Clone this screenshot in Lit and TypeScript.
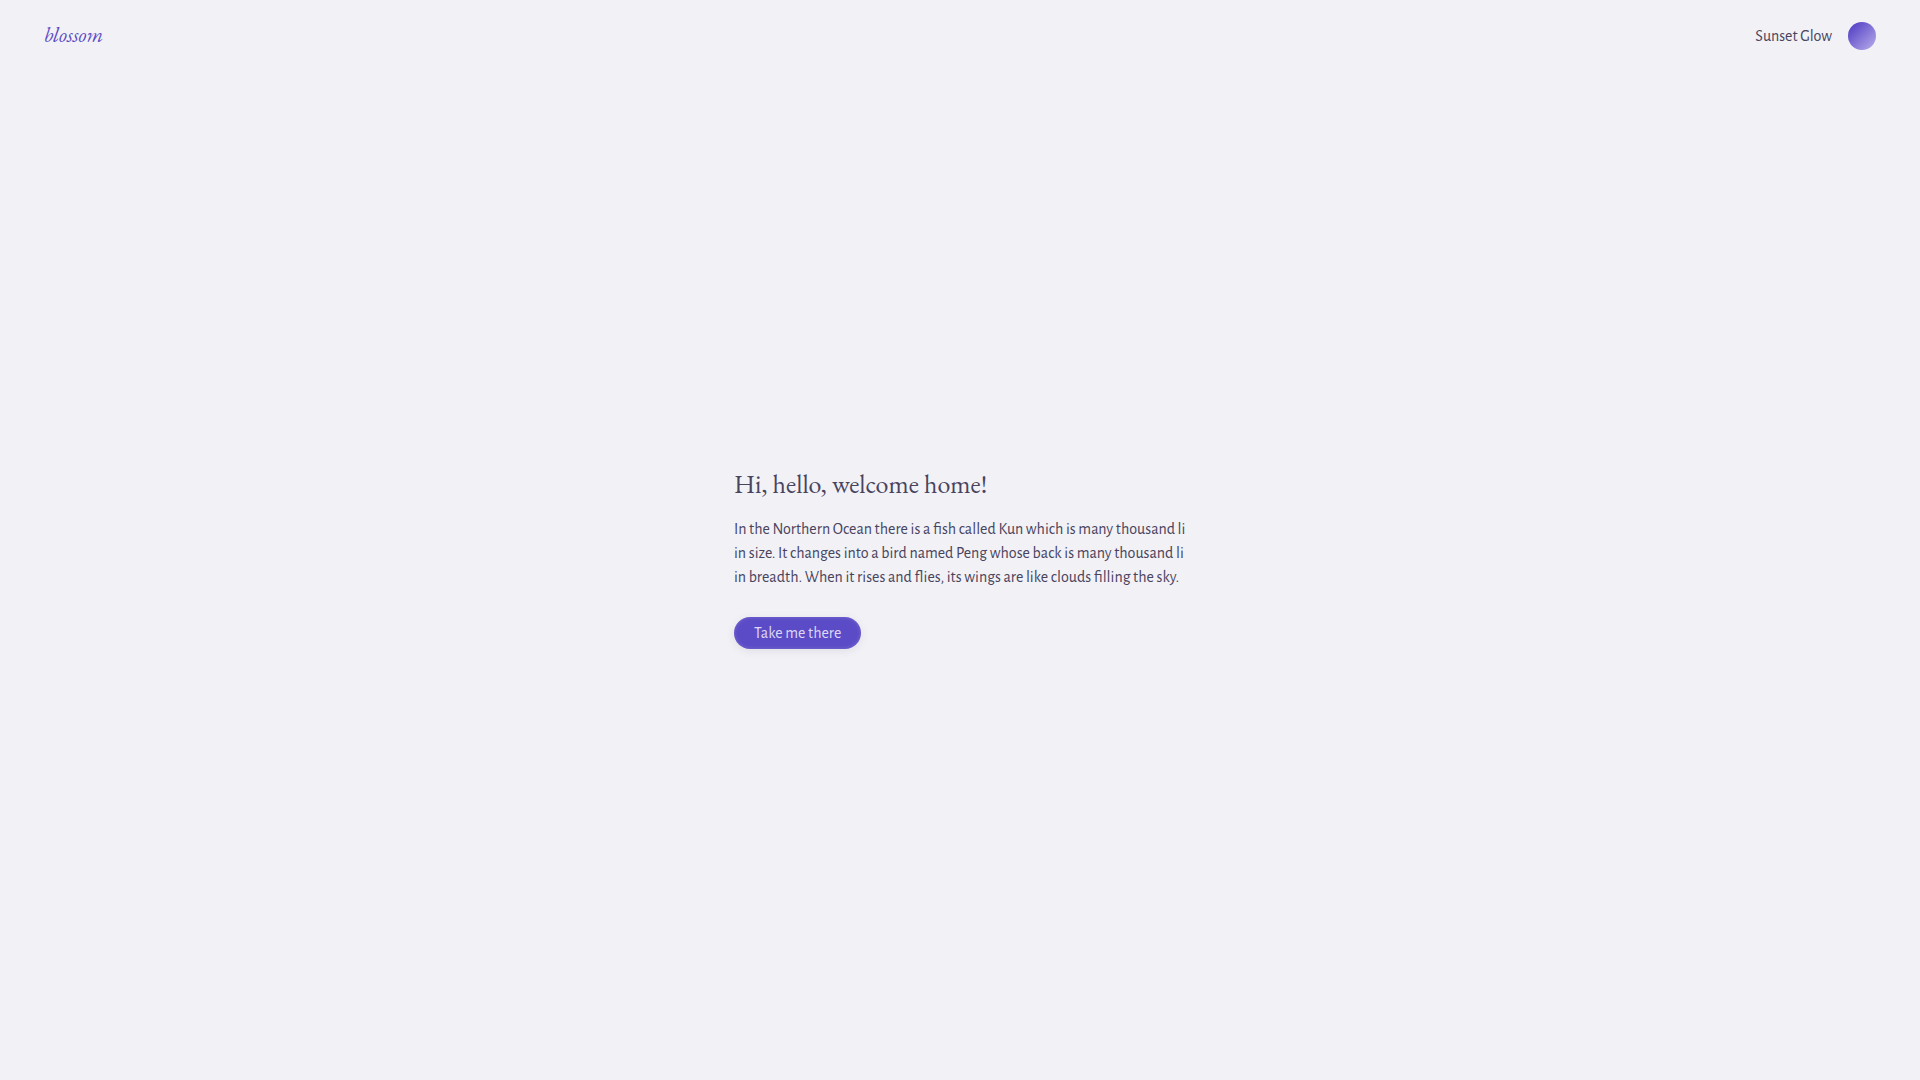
import { LitElement, html, css } from "lit";
import { customElement, property } from "lit/decorators.js";

@customElement("app-root")
export class AppRoot extends LitElement {
  @property() userName = "Sunset Glow";

  static styles = css`
    :host {
      display: flex;
      flex-direction: column;
      min-height: 100vh;
      box-sizing: border-box;
      background: #f2f1f6;
      color: #48445e;
      font-family: "Alegreya Sans", Lato, "Liberation Sans", sans-serif;
      font-size: 16px;
      line-height: 24px;
    }
    .bar {
      display: flex;
      align-items: center;
      justify-content: space-between;
      padding: 22px 44px;
    }
    .brand {
      padding-bottom: 2px;
      color: #5b4bc4;
      font-family: "EB Garamond", "Liberation Serif", serif;
      font-size: 21px;
      font-style: italic;
      text-decoration: none;
    }
    .account {
      display: flex;
      align-items: center;
      gap: 16px;
    }
    .avatar {
      width: 28px;
      height: 28px;
      border-radius: 50%;
      background: linear-gradient(135deg, #5a48c8 15%, #b9aeea 100%);
    }
    .main {
      flex: 1;
      display: flex;
      flex-direction: column;
      align-items: center;
      justify-content: center;
      padding: 0 24px 36px;
    }
    .welcome {
      width: 100%;
      max-width: 452px;
    }
    .title {
      margin: 0 0 16px;
      font-family: "EB Garamond", "Liberation Serif", serif;
      font-size: 26px;
      font-weight: 400;
      line-height: 34px;
    }
    .text {
      margin: 0 0 28px;
    }
    .action {
      display: block;
      height: 32px;
      padding: 0 20px;
      border: 0;
      border-radius: 16px;
      background: #5b4bc6;
      box-shadow:
        inset 0 0 4px rgba(255, 255, 255, 0.2),
        0 2px 8px rgba(69, 65, 90, 0.1);
      color: #ddd9f5;
      font: inherit;
      cursor: pointer;
    }
  `;

  render() {
    return html`
      <header class="bar">
        <a class="brand" href="#">blossom</a>
        <div class="account">
          <span>${this.userName}</span>
          <span class="avatar" aria-hidden="true"></span>
        </div>
      </header>
      <main class="main">
        <section class="welcome">
          <h1 class="title">Hi, hello, welcome home!</h1>
          <p class="text">
            In the Northern Ocean there is a fish called Kun which is many thousand li<br />
            in size. It changes into a bird named Peng whose back is many thousand li<br />
            in breadth. When it rises and flies, its wings are like clouds filling the sky.
          </p>
          <button class="action" type="button">Take me there</button>
        </section>
      </main>
    `;
  }
}
